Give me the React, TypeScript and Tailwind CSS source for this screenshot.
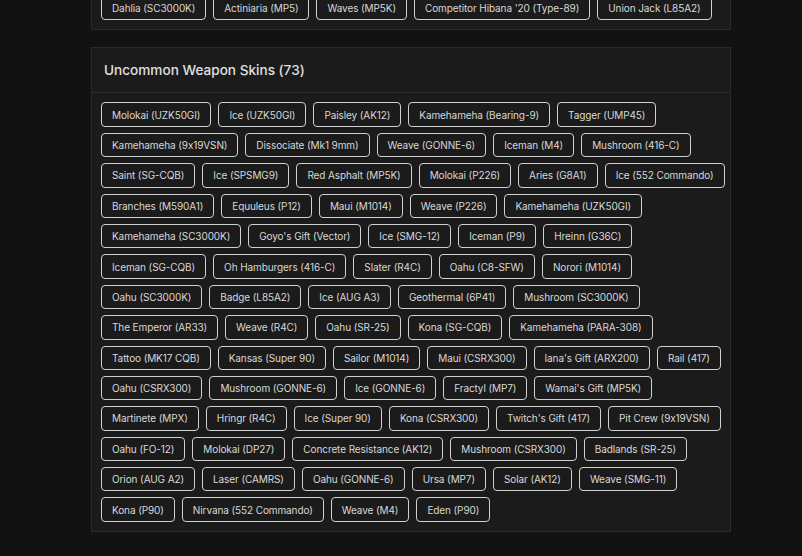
const topRow = [
  "Dahlia (SC3000K)",
  "Actiniaria (MP5)",
  "Waves (MP5K)",
  "Competitor Hibana '20 (Type-89)",
  "Union Jack (L85A2)",
];

const rows: string[][] = [
  ["Molokai (UZK50GI)", "Ice (UZK50GI)", "Paisley (AK12)", "Kamehameha (Bearing-9)", "Tagger (UMP45)"],
  ["Kamehameha (9x19VSN)", "Dissociate (Mk1 9mm)", "Weave (GONNE-6)", "Iceman (M4)", "Mushroom (416-C)"],
  ["Saint (SG-CQB)", "Ice (SPSMG9)", "Red Asphalt (MP5K)", "Molokai (P226)", "Aries (G8A1)", "Ice (552 Commando)"],
  ["Branches (M590A1)", "Equuleus (P12)", "Maui (M1014)", "Weave (P226)", "Kamehameha (UZK50GI)"],
  ["Kamehameha (SC3000K)", "Goyo's Gift (Vector)", "Ice (SMG-12)", "Iceman (P9)", "Hreinn (G36C)"],
  ["Iceman (SG-CQB)", "Oh Hamburgers (416-C)", "Slater (R4C)", "Oahu (C8-SFW)", "Norori (M1014)"],
  ["Oahu (SC3000K)", "Badge (L85A2)", "Ice (AUG A3)", "Geothermal (6P41)", "Mushroom (SC3000K)"],
  ["The Emperor (AR33)", "Weave (R4C)", "Oahu (SR-25)", "Kona (SG-CQB)", "Kamehameha (PARA-308)"],
  ["Tattoo (MK17 CQB)", "Kansas (Super 90)", "Sailor (M1014)", "Maui (CSRX300)", "Iana's Gift (ARX200)", "Rail (417)"],
  ["Oahu (CSRX300)", "Mushroom (GONNE-6)", "Ice (GONNE-6)", "Fractyl (MP7)", "Wamai's Gift (MP5K)"],
  ["Martinete (MPX)", "Hringr (R4C)", "Ice (Super 90)", "Kona (CSRX300)", "Twitch's Gift (417)", "Pit Crew (9x19VSN)"],
  ["Oahu (FO-12)", "Molokai (DP27)", "Concrete Resistance (AK12)", "Mushroom (CSRX300)", "Badlands (SR-25)"],
  ["Orion (AUG A2)", "Laser (CAMRS)", "Oahu (GONNE-6)", "Ursa (MP7)", "Solar (AK12)", "Weave (SMG-11)"],
  ["Kona (P90)", "Nirvana (552 Commando)", "Weave (M4)", "Eden (P90)"],
];

const Skin = ({ name }: { name: string }) => (
  <button className="h-[24.4px] px-[10px] rounded-[4px] border border-[#d0d0d0] text-[10px] tracking-[-0.1px] leading-none text-[#d8d8d8] whitespace-nowrap">
    {name}
  </button>
);

export default function App() {
  return (
    <div className="min-h-[556px] bg-[#121212] font-['Inter',sans-serif] [font-feature-settings:'calt'_0] overflow-hidden">
      <div className="w-[640px] ml-[91px] -mt-[14px] flex flex-col gap-[17px]">
        <section className="bg-[#1b1b1b] border border-[#2a2a2a]">
          <div className="p-[9px] flex gap-[7px]">
            {topRow.map((n) => (
              <Skin key={n} name={n} />
            ))}
          </div>
        </section>

        <section className="bg-[#1b1b1b] border border-[#2a2a2a]">
          <div className="h-[45px] px-3 flex items-center border-b border-[#2c2c2c]">
            <h2 className="text-[13.6px] font-medium text-[#e0e0e0]">Uncommon Weapon Skins (73)</h2>
          </div>
          <div className="p-[9px] flex flex-col gap-[6px]">
            {rows.map((row, i) => (
              <div key={i} className="flex gap-[7px]">
                {row.map((n) => (
                  <Skin key={n} name={n} />
                ))}
              </div>
            ))}
          </div>
        </section>
      </div>
    </div>
  );
}
